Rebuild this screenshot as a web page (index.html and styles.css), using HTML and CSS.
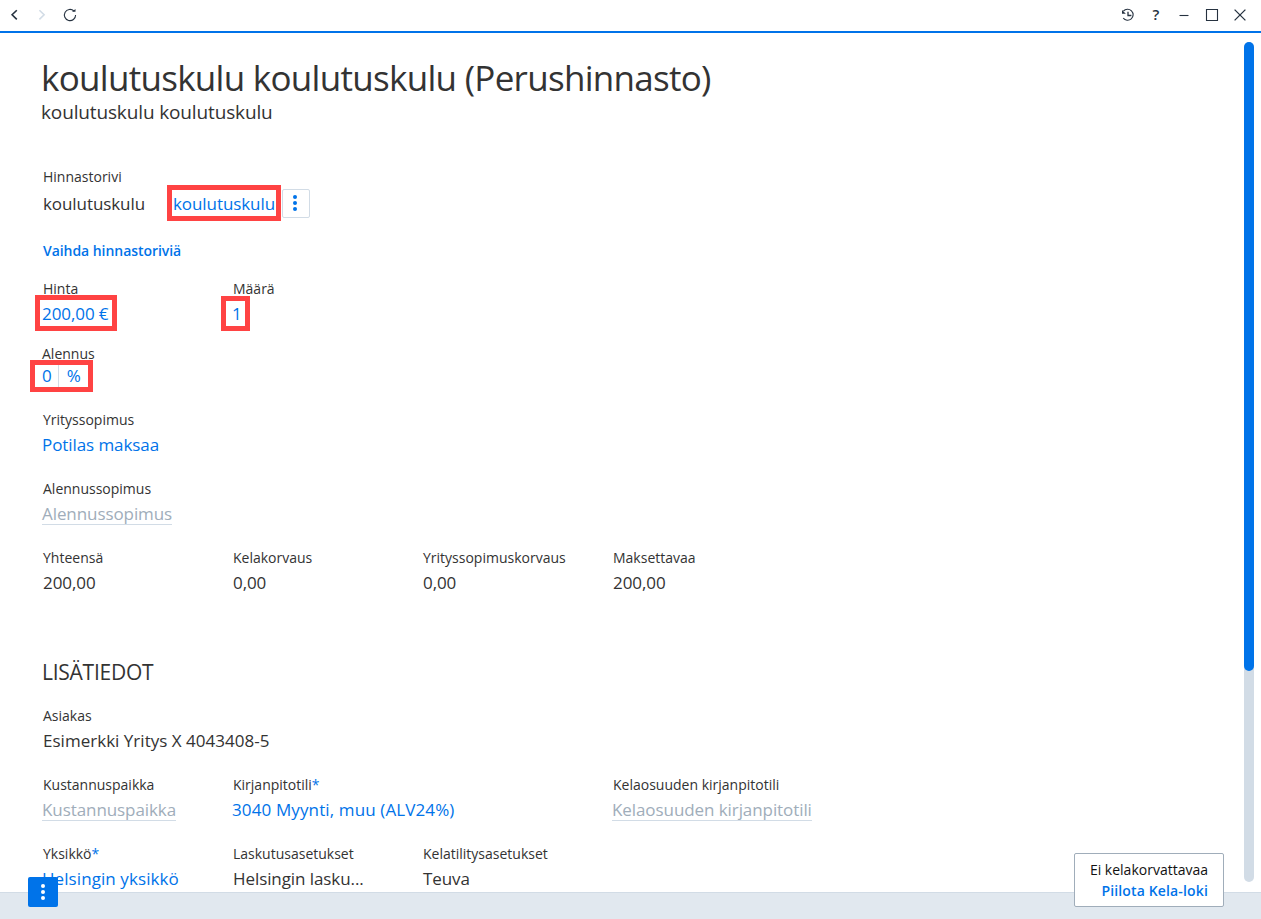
FILE: index.html
```html
<!DOCTYPE html>
<html lang="fi">
<head>
  <meta charset="UTF-8" />
  <meta name="viewport" content="width=device-width, initial-scale=1.0"/>
  <title>koulutuskulu</title>
  <link rel="stylesheet" href="styles.css">
</head>
<body>

<!-- Toolbar -->
<header class="toolbar">
  <div class="nav-icons">
    <svg class="icon" viewBox="0 0 16 16"><path d="M10.8 3.2 6.1 7.8l4.7 4.6" stroke-width="1.6"/></svg>
    <svg class="icon disabled" viewBox="0 0 16 16"><path d="M5.4 3.2 10.1 7.8 5.4 12.4" stroke-width="1.6"/></svg>
    <svg class="icon" viewBox="0 0 16 16"><path d="M11.9 4A5.6 5.6 0 1 0 13.6 8"/><path d="M10 4.7h3.5V2z" class="solid"/></svg>
  </div>
  <div class="window-icons">
    <svg class="icon" viewBox="0 0 16 16"><path d="M3.4 4.2A5.5 5.5 0 1 1 3.2 11"/><path d="M8 4.7V8.5h3.4" stroke-width="1.3"/><path d="M2 3v3.8h3.8z" class="solid"/></svg>
    <span class="help">?</span>
    <svg class="icon" viewBox="0 0 16 16"><path d="M3.5 8.5h9"/></svg>
    <svg class="icon" viewBox="0 0 16 16"><path d="M2.5 2.5h11v11h-11z"/></svg>
    <svg class="icon" viewBox="0 0 16 16"><path d="M2.6 2.6l10.8 10.8M13.4 2.6L2.6 13.4" stroke-width="1.3"/></svg>
  </div>
</header>

<main class="content">
  <h1>koulutuskulu koulutuskulu (Perushinnasto)</h1>
  <p class="subtitle">koulutuskulu koulutuskulu</p>

  <div class="field price-row">
    <div class="label">Hinnastorivi</div>
    <div class="price-value">
      <span class="price-name">koulutuskulu</span>
      <a class="link price-link">koulutuskulu<i class="mark mark-row"></i></a>
      <button class="more"><i></i><i></i><i></i></button>
    </div>
  </div>
  <a class="change-link">Vaihda hinnastoriviä</a>

  <div class="row row-price">
    <div class="field">
      <div class="label">Hinta</div>
      <div class="value"><a class="link">200,00 €<i class="mark mark-price"></i></a></div>
    </div>
    <div class="field">
      <div class="label">Määrä</div>
      <div class="value"><a class="link">1<i class="mark mark-amount"></i></a></div>
    </div>
  </div>

  <div class="field discount">
    <div class="label">Alennus</div>
    <div class="discount-value">
      <a class="link">0</a><a class="link percent">%</a>
      <i class="mark mark-discount"></i>
    </div>
  </div>

  <div class="row">
    <div class="field">
      <div class="label">Yrityssopimus</div>
      <div class="value"><a class="link">Potilas maksaa</a></div>
    </div>
  </div>
  <div class="row">
    <div class="field">
      <div class="label">Alennussopimus</div>
      <div class="value"><span class="empty">Alennussopimus</span></div>
    </div>
  </div>
  <div class="row">
    <div class="field">
      <div class="label">Yhteensä</div>
      <div class="value">200,00</div>
    </div>
    <div class="field">
      <div class="label">Kelakorvaus</div>
      <div class="value">0,00</div>
    </div>
    <div class="field">
      <div class="label">Yrityssopimuskorvaus</div>
      <div class="value">0,00</div>
    </div>
    <div class="field">
      <div class="label">Maksettavaa</div>
      <div class="value">200,00</div>
    </div>
  </div>

  <h2>LISÄTIEDOT</h2>
  <div class="row">
    <div class="field wide">
      <div class="label">Asiakas</div>
      <div class="value customer">Esimerkki Yritys X 4043408-5</div>
    </div>
  </div>
  <div class="row">
    <div class="field">
      <div class="label">Kustannuspaikka</div>
      <div class="value"><span class="empty">Kustannuspaikka</span></div>
    </div>
    <div class="field wide">
      <div class="label">Kirjanpitotili<span class="required">*</span></div>
      <div class="value"><a class="link account">3040 Myynti, muu (ALV24%)</a></div>
    </div>
    <div class="field wide">
      <div class="label">Kelaosuuden kirjanpitotili</div>
      <div class="value"><span class="empty">Kelaosuuden kirjanpitotili</span></div>
    </div>
  </div>
  <div class="row">
    <div class="field">
      <div class="label">Yksikkö<span class="required">*</span></div>
      <div class="value"><a class="link unit">Helsingin yksikkö</a></div>
    </div>
    <div class="field">
      <div class="label">Laskutusasetukset</div>
      <div class="value">Helsingin lasku...</div>
    </div>
    <div class="field">
      <div class="label">Kelatilitysasetukset</div>
      <div class="value">Teuva</div>
    </div>
  </div>

  <div class="scrollbar"><div class="thumb"></div></div>
</main>

<footer class="footer"></footer>

<button class="menu-button"><i></i><i></i><i></i></button>
<div class="kela-box">
  <div class="kela-text">Ei kelakorvattavaa</div>
  <a class="kela-link">Piilota Kela-loki</a>
</div>

</body>
</html>
```
FILE: styles.css
```css
* {
  box-sizing: border-box;
}

body {
  margin: 0;
  height: 919px;
  display: flex;
  flex-direction: column;
  position: relative;
  overflow: hidden;
  background: #fff;
  color: #333;
  font-family: "Open Sans", "Noto Sans", sans-serif;
  font-size: 17px;
}

button {
  padding: 0;
  display: flex;
  flex-direction: column;
  align-items: center;
  justify-content: center;
}

/* Toolbar */
.toolbar {
  flex: none;
  height: 33px;
  padding: 0 13px 1px 6px;
  border-bottom: 2px solid #0073e9;
  display: flex;
  justify-content: space-between;
  align-items: center;
}

.nav-icons,
.window-icons {
  display: flex;
  gap: 12px;
}

.icon {
  width: 16px;
  height: 16px;
  fill: none;
  stroke: #263240;
  stroke-width: 1.1;
}

.icon.disabled {
  stroke: #d2dce6;
}

.icon .solid {
  fill: #263240;
  stroke: none;
}

.help {
  width: 16px;
  line-height: 14px;
  text-align: center;
  font-size: 15px;
  font-weight: 600;
  color: #263240;
}

/* Content */
.content {
  flex: none;
  height: 859px;
  position: relative;
  overflow: hidden;
  padding: 22px 0 0 43px;
}

h1 {
  margin: 0 0 0 -2px;
  font-size: 35px;
  font-weight: 400;
  line-height: 46px;
  letter-spacing: -0.71px;
  white-space: nowrap;
}

.subtitle {
  margin: 0 0 43px -2px;
  font-size: 19px;
  line-height: 23px;
  letter-spacing: -0.14px;
}

h2 {
  margin: 63px 0 22px -1px;
  font-size: 21px;
  font-weight: 400;
  line-height: 23px;
  height: 23px;
  letter-spacing: -0.25px;
}

.row {
  display: flex;
  margin-bottom: 19px;
}

.field {
  width: 190px;
  white-space: nowrap;
}

.field.wide {
  width: 380px;
}

.label {
  font-size: 14px;
  line-height: 20px;
}

.value {
  line-height: 30px;
  height: 30px;
  letter-spacing: -0.08px;
}

.link {
  position: relative;
  margin-left: -1px;
  color: #0073e9;
}

.account {
  letter-spacing: 0.12px;
}

.unit {
  letter-spacing: 0.08px;
}

.customer {
  letter-spacing: 0.02px;
}

.required {
  color: #0073e9;
}

.empty {
  display: inline-block;
  margin-left: -1px;
  height: 22px;
  line-height: 22px;
  border-bottom: 1px solid #d2dce6;
  color: #a0adba;
}

.price-row {
  height: 74px;
}

.price-value {
  display: flex;
  height: 33px;
  align-items: center;
  letter-spacing: -0.08px;
}

.price-name {
  width: 131px;
  flex: none;
}

.more {
  flex: none;
  width: 28px;
  height: 29px;
  margin-left: 7px;
  padding: 0 2px 2px 0;
  border: 1px solid #d2dce6;
  border-radius: 2px;
  background: #fff;
  gap: 2px;
}

.more i {
  width: 4px;
  height: 4px;
  border-radius: 50%;
  background: #0073e9;
}

.change-link {
  display: block;
  height: 38px;
  line-height: 20px;
  font-size: 14px;
  font-weight: 600;
  letter-spacing: -0.05px;
  color: #0073e9;
}

.row-price {
  margin-bottom: 15px;
}

.discount {
  height: 66px;
}

.discount .label {
  margin-left: -1px;
}

.discount-value {
  position: relative;
  display: flex;
  height: 24px;
  line-height: 24px;
}

.percent {
  margin-left: 6px;
  padding-left: 8px;
  border-left: 1px solid #d2dce6;
}

/* Highlight frames */
.mark {
  position: absolute;
  border: 5px solid #ff4343;
}

.mark-row {
  left: -6px;
  top: -7px;
  width: 114px;
  height: 36px;
}

.mark-price {
  left: -7px;
  top: -7px;
  width: 82px;
  height: 36px;
}

.mark-amount {
  left: -11px;
  top: -6px;
  width: 29px;
  height: 35px;
}

.mark-discount {
  left: -13px;
  top: -4px;
  width: 63px;
  height: 32px;
}

/* Scrollbar */
.scrollbar {
  position: absolute;
  top: 9px;
  right: 7px;
  width: 10px;
  height: 840px;
  border-radius: 5px;
  background: #d2dce6;
}

.thumb {
  height: 629px;
  border-radius: 5px;
  background: #0073e9;
}

/* Footer */
.footer {
  flex: none;
  height: 27px;
  border-top: 1px solid #d2dce6;
  background: #e1e8ef;
}

.menu-button {
  position: absolute;
  left: 28px;
  top: 877px;
  width: 30px;
  height: 30px;
  border: none;
  border-radius: 2px;
  background: #0073e9;
  gap: 2px;
}

.menu-button i {
  width: 4px;
  height: 4px;
  border-radius: 50%;
  background: #fff;
}

.kela-box {
  position: absolute;
  left: 1074px;
  top: 853px;
  width: 150px;
  height: 54px;
  padding: 5px 15px 0 0;
  border: 1px solid #a0adba;
  border-radius: 2px;
  background: #fff;
  text-align: right;
  font-size: 14px;
  line-height: 21px;
  white-space: nowrap;
}

.kela-text {
  color: #111;
}

.kela-link {
  font-weight: 600;
  letter-spacing: 0.15px;
  color: #0073e9;
}
```
